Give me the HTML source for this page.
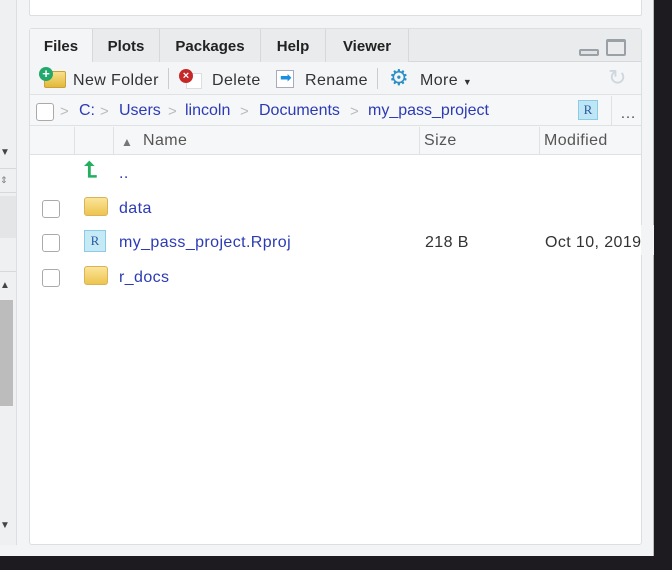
<!DOCTYPE html>
<html><head><style>
*{margin:0;padding:0;box-sizing:border-box}
body{width:672px;height:570px;background:#1d1b20;position:relative;overflow:hidden;font-family:"Liberation Sans","DejaVu Sans",sans-serif}
.abs{position:absolute}
.win{left:0;top:0;width:654px;height:556px;background:#f3f4f6;border-right:1px solid #bbb}
.t{position:absolute;font-size:16px;letter-spacing:0.4px;white-space:nowrap}
.bc{letter-spacing:0}
.lnk{color:#2c3bb4}
.cb{position:absolute;width:18px;height:18px;border:1.5px solid #aaa;border-radius:3px;background:#fff}
.tab{position:absolute;top:29px;height:33px;font-weight:bold;font-size:15px;color:#222;text-align:center;line-height:35px;border-right:1px solid #d6d8da;background:#e9ebed}
.sep{position:absolute;color:#bbb;font-size:15px}
</style></head><body>
<div class="abs win"></div>
<div class="abs" style="left:0;top:0;width:17px;height:545px;background:#eef0f2;border-right:1px solid #dcdee0"></div>
<div class="abs" style="left:0;top:168px;width:16px;height:25px;border-top:1px solid #d8d8d8;border-bottom:1px solid #d8d8d8"></div>
<div class="abs" style="left:0;top:196px;width:16px;height:42px;background:#e3e5e7"></div>
<div class="abs" style="left:0;top:238px;width:16px;height:34px;border-bottom:1px solid #d8d8d8"></div>
<div class="abs" style="left:0;top:300px;width:13px;height:106px;background:#bcbcbc"></div>
<div class="t" style="left:0;top:147px;font-size:10px;color:#444">▼</div>
<div class="t" style="left:0;top:175px;font-size:9px;color:#777">⇕</div>
<div class="t" style="left:0;top:280px;font-size:10px;color:#444">▲</div>
<div class="t" style="left:0;top:520px;font-size:10px;color:#444">▼</div>
<div class="abs" style="left:29px;top:-2px;width:613px;height:18px;background:#fff;border:1px solid #dcdfe2;border-radius:2px"></div>
<div class="abs" style="left:29px;top:28px;width:613px;height:517px;background:#fff;border:1px solid #dcdfe2;border-radius:3px"></div>
<div class="abs" style="left:30px;top:29px;width:611px;height:33px;background:#e9ebed;border-bottom:1px solid #d6d8da"></div>
<div class="tab" style="left:30px;width:63px;background:#f3f5f7;height:34px">Files</div>
<div class="tab" style="left:93px;width:67px">Plots</div>
<div class="tab" style="left:160px;width:101px">Packages</div>
<div class="tab" style="left:261px;width:65px">Help</div>
<div class="tab" style="left:326px;width:83px">Viewer</div>
<div class="abs" style="left:579px;top:49px;width:20px;height:7px;border:2px solid #9aa0a6;border-radius:2px;background:#e0e3e6"></div>
<div class="abs" style="left:606px;top:39px;width:20px;height:17px;border:2px solid #9aa0a6;border-radius:2px;border-top-width:3px"></div>
<div class="abs" style="left:30px;top:62px;width:611px;height:33px;background:#f3f5f7;border-bottom:1px solid #dfe1e3"></div>
<div class="abs" style="left:44px;top:71px;width:22px;height:17px;background:linear-gradient(#f8e08a,#e2b83a);border:1px solid #c9a33a;border-radius:2px"></div>
<div class="abs" style="left:39px;top:67px;width:14px;height:14px;border-radius:50%;background:#22a86c;color:#fff;font-size:13px;line-height:13px;text-align:center;font-weight:bold">+</div>
<div class="t" style="left:73px;top:72px;color:#333">New Folder</div>
<div class="abs" style="left:168px;top:68px;width:1px;height:21px;background:#ccc"></div>
<div class="abs" style="left:186px;top:73px;width:16px;height:16px;background:#fff;border:1px solid #ddd"></div>
<div class="abs" style="left:179px;top:69px;width:14px;height:14px;border-radius:50%;background:#c62828;color:#fff;font-size:11px;line-height:14px;text-align:center;font-weight:bold">×</div>
<div class="t" style="left:212px;top:72px;color:#333">Delete</div>
<div class="abs" style="left:276px;top:70px;width:18px;height:18px;border:1px solid #aab;background:#fff"></div>
<div class="t" style="left:280px;top:69px;color:#1a8fe0;font-size:14px;font-weight:bold">➡</div>
<div class="t" style="left:305px;top:72px;color:#333">Rename</div>
<div class="abs" style="left:377px;top:68px;width:1px;height:21px;background:#ccc"></div>
<div class="t" style="left:389px;top:65px;color:#2a8fc4;font-size:22px">⚙</div>
<div class="t" style="left:420px;top:72px;color:#333">More <span style="font-size:9px">▼</span></div>
<div class="t" style="left:608px;top:65px;color:#d0d6de;font-size:22px">↻</div>
<div class="abs" style="left:30px;top:95px;width:611px;height:31px;border-bottom:1px solid #dfe1e3;background:#f6f7f8"></div>
<div class="cb" style="left:36px;top:103px"></div>
<div class="sep" style="left:60px;top:103px">&gt;</div>
<div class="t lnk bc" style="left:79px;top:102px">C:</div>
<div class="sep" style="left:100px;top:103px">&gt;</div>
<div class="t lnk bc" style="left:119px;top:102px">Users</div>
<div class="sep" style="left:168px;top:103px">&gt;</div>
<div class="t lnk bc" style="left:185px;top:102px">lincoln</div>
<div class="sep" style="left:240px;top:103px">&gt;</div>
<div class="t lnk bc" style="left:259px;top:102px">Documents</div>
<div class="sep" style="left:350px;top:103px">&gt;</div>
<div class="t lnk bc" style="left:368px;top:102px">my_pass_project</div>
<div class="abs" style="left:578px;top:100px;width:20px;height:20px;background:#bfe6f4;border:1px solid #8ccbe6;color:#2a5aa0;font-family:'Liberation Serif',serif;font-size:13px;text-align:center;line-height:18px">R</div>
<div class="abs" style="left:611px;top:96px;width:1px;height:30px;background:#dfe1e3"></div>
<div class="t" style="left:620px;top:105px;color:#555">…</div>
<div class="abs" style="left:30px;top:126px;width:611px;height:29px;border-bottom:1px solid #dfe1e3;background:#f6f7f8"></div>
<div class="abs" style="left:74px;top:127px;width:1px;height:28px;background:#dfe1e3"></div>
<div class="abs" style="left:113px;top:127px;width:1px;height:28px;background:#dfe1e3"></div>
<div class="abs" style="left:419px;top:127px;width:1px;height:28px;background:#dfe1e3"></div>
<div class="abs" style="left:539px;top:127px;width:1px;height:28px;background:#dfe1e3"></div>
<div class="t" style="left:121px;top:135px;color:#777;font-size:12px">▲</div>
<div class="t" style="left:143px;top:132px;color:#555">Name</div>
<div class="t" style="left:424px;top:132px;color:#555">Size</div>
<div class="t" style="left:544px;top:132px;color:#555">Modified</div>
<div class="t" style="left:84px;top:157px;color:#22b060;font-size:22px;font-weight:bold">⮤</div>
<div class="t lnk" style="left:119px;top:165px">..</div>
<div class="cb" style="left:42px;top:200px"></div>
<div class="abs" style="left:84px;top:197px;width:24px;height:19px;background:linear-gradient(#fbe49a,#edc44e);border:1px solid #d8b35a;border-radius:3px"></div>
<div class="t lnk" style="left:119px;top:200px">data</div>
<div class="cb" style="left:42px;top:234px"></div>
<div class="abs" style="left:84px;top:230px;width:22px;height:22px;background:#c6e9f6;border:1px solid #8ccbe6;color:#2a5aa0;font-family:'Liberation Serif',serif;font-size:13px;text-align:center;line-height:20px">R</div>
<div class="t lnk" style="left:119px;top:234px">my_pass_project.Rproj</div>
<div class="t" style="left:425px;top:234px;color:#333">218 B</div>
<div class="t" style="left:545px;top:234px;color:#333">Oct 10, 2019</div>
<div class="abs" style="left:641px;top:225px;width:13px;height:30px;background:#f3f4f6"></div>
<div class="cb" style="left:42px;top:269px"></div>
<div class="abs" style="left:84px;top:266px;width:24px;height:19px;background:linear-gradient(#fbe49a,#edc44e);border:1px solid #d8b35a;border-radius:3px"></div>
<div class="t lnk" style="left:119px;top:269px">r_docs</div>
</body></html>
